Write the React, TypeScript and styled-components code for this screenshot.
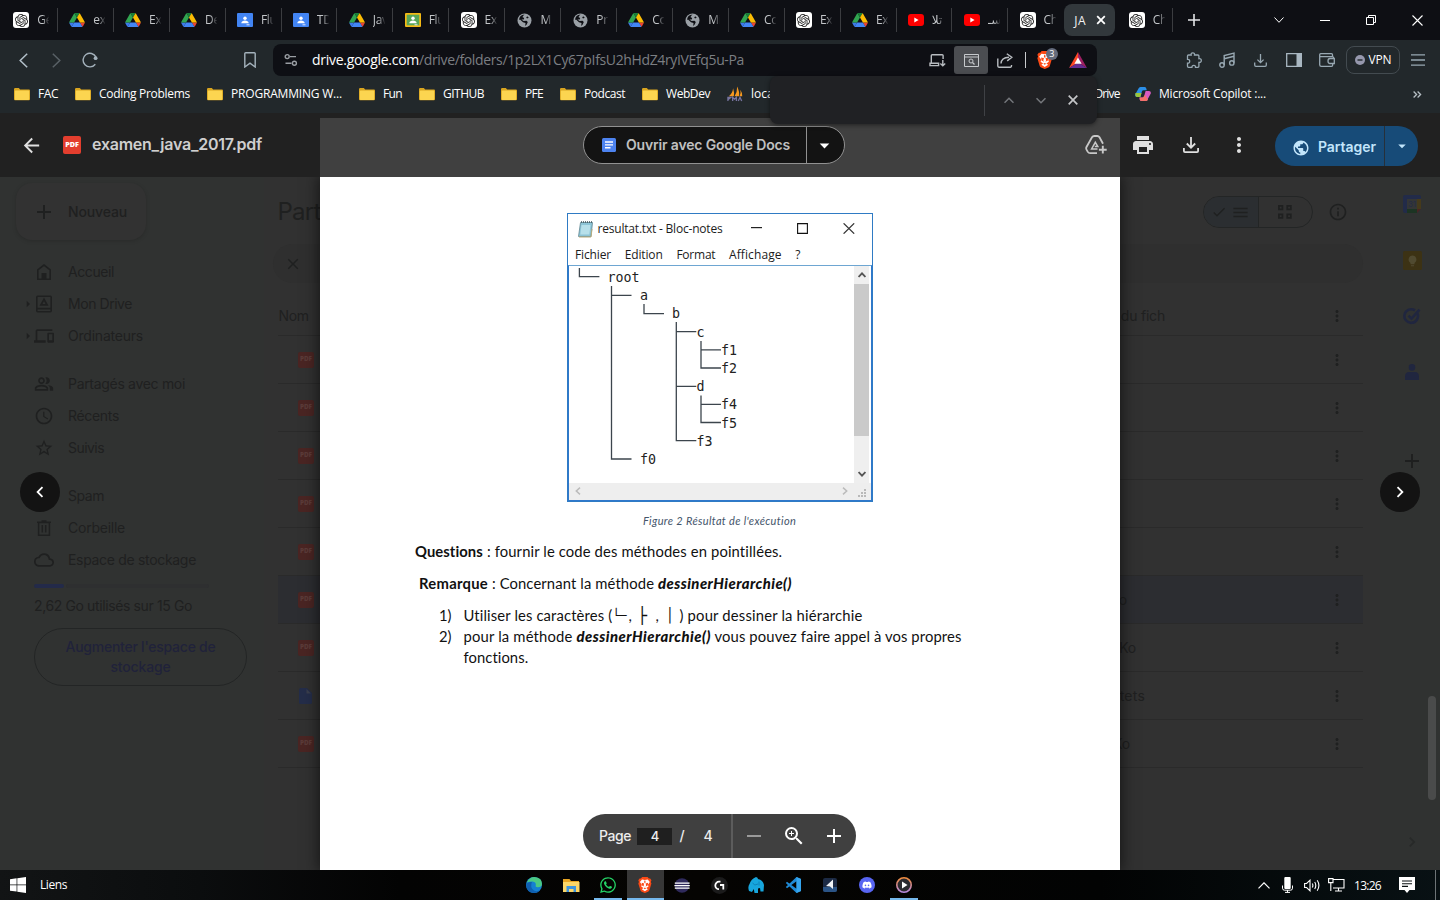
import React, { useLayoutEffect, useRef, useState } from "react";
import styled, { createGlobalStyle, css } from "styled-components";
import {
  MdAccessTime,
  MdAdd,
  MdArrowBack,
  MdArrowDropDown,
  MdArrowRight,
  MdCheck,
  MdChevronLeft,
  MdChevronRight,
  MdClose,
  MdDevices,
  MdInfoOutline,
  MdMenu,
  MdMoreVert,
  MdOutlineCloud,
  MdOutlinePeopleAlt,
  MdPrint,
  MdPublic,
  MdRemove,
  MdStarOutline,
  MdZoomIn,
} from "react-icons/md";
import { SiOpenai } from "react-icons/si";
import { FaDiscord, FaWhatsapp } from "react-icons/fa";

const ui = `"Open Sans", "Noto Sans", "DejaVu Sans", sans-serif`;
const google = `Inter, Roboto, sans-serif`;
const docFont = `Lato, "Open Sans", sans-serif`;
const mono = `"DejaVu Sans Mono", "Liberation Mono", monospace`;

const Global = createGlobalStyle`
  * { box-sizing: border-box; }
  html, body { margin: 0; padding: 0; background: #000; overflow: hidden; }
  svg { display: block; flex: none; }
`;

/* ---------- text that tracks itself to fill its slot ---------- */

const Slot = styled.span<{ $w: number }>`
  display: block;
  width: ${(p) => p.$w}px;
  flex: none;
  white-space: pre;
`;

function Fit({ w, children, className }: { w: number; children: React.ReactNode; className?: string }) {
  const ref = useRef<HTMLSpanElement>(null);
  const [tracking, setTracking] = useState(0);
  useLayoutEffect(() => {
    const el = ref.current;
    if (!el) return;
    const natural = el.getBoundingClientRect().width;
    const count = (el.textContent || "").length || 1;
    setTracking((w - natural) / count);
  }, [w]);
  return (
    <Slot $w={w} className={className}>
      <span ref={ref} style={{ letterSpacing: `${tracking}px` }}>
        {children}
      </span>
    </Slot>
  );
}

/* ---------- shared ---------- */

const Screen = styled.div`
  position: relative;
  width: 1440px;
  height: 900px;
  display: flex;
  flex-direction: column;
  overflow: hidden;
  font-family: ${ui};
  font-size: 12px;
`;

const Cell = styled.div<{ $w: number; $color?: string }>`
  width: ${(p) => p.$w}px;
  height: 100%;
  flex: none;
  display: flex;
  align-items: center;
  justify-content: center;
  color: ${(p) => p.$color || "inherit"};
`;

const Grow = styled.div`
  flex: 1;
`;

/* ---------- logos ---------- */

const GptBox = styled.div`
  width: 16px;
  height: 16px;
  border-radius: 3px;
  background: #fff;
  color: #222;
  display: flex;
  align-items: center;
  justify-content: center;
`;

const Gpt = () => (
  <GptBox>
    <SiOpenai size={13} />
  </GptBox>
);

const DriveLogo = () => (
  <svg width="16" height="14" viewBox="0 0 87.3 78">
    <path d="m6.6 66.85 3.85 6.65c.8 1.4 1.95 2.5 3.3 3.3l13.75-23.8h-27.5c0 1.55.4 3.1 1.2 4.5z" fill="#3c7bea" />
    <path d="m43.65 25-13.75-23.8c-1.35.8-2.5 1.9-3.3 3.3l-25.4 44a9.06 9.06 0 0 0 -1.2 4.5h27.5z" fill="#31a550" />
    <path d="m73.55 76.8c1.35-.8 2.5-1.9 3.3-3.3l1.6-2.75 7.65-13.25c.8-1.4 1.2-2.95 1.2-4.5h-27.502l5.852 11.5z" fill="#ea4335" />
    <path d="m43.65 25 13.75-23.8c-1.35-.8-2.9-1.2-4.5-1.2h-18.5c-1.6 0-3.15.45-4.5 1.2z" fill="#188038" />
    <path d="m59.8 53h-32.3l-13.75 23.8c1.35.8 2.9 1.2 4.5 1.2h50.8c1.6 0 3.15-.45 4.5-1.2z" fill="#4285f4" />
    <path d="m73.4 26.5-12.7-22c-.8-1.4-1.95-2.5-3.3-3.3l-13.75 23.8 16.15 28h27.45c0-1.55-.4-3.1-1.2-4.5z" fill="#fbbc04" />
  </svg>
);

const Classroom = ({ green }: { green?: boolean }) => (
  <svg width="16" height="14" viewBox="0 0 16 14">
    <rect width="16" height="14" rx="1" fill={green ? "#f5ba15" : "#4285f4"} />
    <rect x="1.7" y="1.7" width="12.6" height="10.6" fill={green ? "#57a55a" : "#4285f4"} />
    <circle cx="8" cy="5.3" r="1.7" fill="#fff" />
    <path d="M4.3 10.2c0-2 1.9-2.8 3.7-2.8s3.7.8 3.7 2.8z" fill="#fff" />
    <path d="M9.5 12.3h3v-1h-3z" fill="#dfe9fb" />
  </svg>
);

const Globe = () => (
  <svg width="15" height="15" viewBox="0 0 15 15">
    <circle cx="7.5" cy="7.5" r="7" fill="#9aa0a6" />
    <path d="M7.6 1.600C6 2.500 6.500 3.400 5.300 4l1.900.9-.5 1.500-2.300.1 2.200 1.500 2.900-.3 1.300 1.400-1.100 2.500-1.500 1.300.3-3-2.500-.6-3-2.900-1 .7A6 6 0 0 1 7.600 1.600z" fill="#0e0f14" />
    <path d="M10.200 3.200l1.600 1.600-1.800.8-.8-1.200z" fill="#0e0f14" />
  </svg>
);

const YouTube = () => (
  <svg width="16" height="12" viewBox="0 0 16 12">
    <rect width="16" height="12" rx="3" fill="#f00" />
    <path d="M6.3 3.5v5L10.6 6z" fill="#fff" />
  </svg>
);

const Folder = () => (
  <svg width="16" height="14" viewBox="0 0 16 14">
    <path d="M0 2.2Q0 1 1.2 1h3.6l1.4 1.6H15q1 0 1 1v8.6q0 1-1 1H1q-1 0-1-1z" fill="#d9a520" />
    <path d="M.8 4.4q0-.8.8-.8h12.8q.8 0 .8.8v7.8q0 .8-.8.8H1.6q-.8 0-.8-.8z" fill="#fcd550" />
  </svg>
);

const BraveLogo = ({ size }: { size: number }) => (
  <svg width={size * 0.86} height={size} viewBox="0 0 86 100">
    <path d="M18 10 26 0h34l8 10 8-1 8 12-4 10 4 9-13 43q-2 6-8 9L43 100 23 92q-6-3-8-9L2 40l4-9-4-10 8-12z" fill="#fb4a16" />
    <path d="M43 18 25 15 12 32l12 16-4 12 14 9-10 8 19 12 19-12-10-8 14-9-4-12 12-16-13-17z" fill="#fff" />
    <path d="M23 36l16 4-4 12 4 8-14-7zM63 36l-16 4 4 12-4 8 14-7zM43 66l8 5-8 6-8-6zM40 22h6l2 14h-10z" fill="#fb4a16" />
  </svg>
);

const BatLogo = () => (
  <svg width="18" height="16" viewBox="0 0 18 16">
    <path d="M9 0 0 16l9-5.2z" fill="#ff4724" />
    <path d="M9 0l9 16-9-5.2z" fill="#9e1f63" />
    <path d="M0 16h18l-9-5.4z" fill="#662d91" />
    <path d="M9 5.6 5.4 11.8h7.2z" fill="#fff" />
  </svg>
);

/* ---------- tab strip ---------- */

const TabStrip = styled.div`
  height: 40px;
  flex: none;
  display: flex;
  align-items: center;
  background: #0e0f14;
  padding-left: 2px;
  color: #fff;
`;

const Tab = styled.div<{ $w?: number; $bare?: boolean }>`
  width: ${(p) => p.$w || 55.92}px;
  height: 24px;
  flex: none;
  display: flex;
  align-items: center;
  gap: 8px;
  padding-left: 11.3px;
  border-right: 1px solid ${(p) => (p.$bare ? "transparent" : "#3b3c40")};
`;

const LastTab = styled(Tab)`
  width: 58px;
  padding-left: 13.5px;
`;

const IconBox = styled.div`
  width: 16px;
  height: 16px;
  flex: none;
  display: flex;
  align-items: center;
  justify-content: center;
`;

const TabTitle = styled.div`
  width: 12px;
  overflow: hidden;
  white-space: nowrap;
  font-size: 12px;
  line-height: 18px;
  color: #c3c6c9;
  letter-spacing: -0.3px;
  mask-image: linear-gradient(90deg, #000 45%, transparent 105%);
`;

const ActiveTab = styled.div`
  width: 51px;
  height: 32px;
  flex: none;
  border-radius: 8px;
  background: #32383c;
  display: flex;
  align-items: center;
  justify-content: space-between;
  padding: 0 9px 0 10px;
  color: #f2f2f2;
`;

const tabs: [React.ReactNode, string][] = [
  [<Gpt />, "Gé"],
  [<DriveLogo />, "ex"],
  [<DriveLogo />, "Ex"],
  [<DriveLogo />, "De"],
  [<Classroom />, "Flu"],
  [<Classroom />, "TD"],
  [<DriveLogo />, "Jav"],
  [<Classroom green />, "Flu"],
  [<Gpt />, "Ex"],
  [<Globe />, "Mi"],
  [<Globe />, "Pr"],
  [<DriveLogo />, "Co"],
  [<Globe />, "Mi"],
  [<DriveLogo />, "Co"],
  [<Gpt />, "Ex"],
  [<DriveLogo />, "Ex"],
  [<YouTube />, "تلا"],
  [<YouTube />, "سـ"],
];

const Tabs = () => (
  <TabStrip>
    {tabs.map(([icon, title], i) => (
      <Tab key={i}>
        <IconBox>{icon}</IconBox>
        <TabTitle>{title}</TabTitle>
      </Tab>
    ))}
    <Tab $bare>
      <IconBox>
        <Gpt />
      </IconBox>
      <TabTitle>Ch</TabTitle>
    </Tab>
    <ActiveTab>
      <Fit w={12}>JA</Fit>
      <svg width="10" height="10" viewBox="0 0 10 10" stroke="#fff" strokeWidth="1.8">
        <path d="M1.2 1.2l7.6 7.6M8.8 1.2 1.2 8.8" />
      </svg>
    </ActiveTab>
    <LastTab>
      <IconBox>
        <Gpt />
      </IconBox>
      <TabTitle>Ch</TabTitle>
    </LastTab>
    <Cell $w={41}>
      <svg width="12" height="12" viewBox="0 0 12 12" stroke="#e4e5e7" strokeWidth="1.6">
        <path d="M6 0v12M0 6h12" />
      </svg>
    </Cell>
    <Grow />
    <Cell $w={46}>
      <svg width="10" height="6" viewBox="0 0 10 6" fill="none" stroke="#fff">
        <path d="M.5.5 5 5.3 9.5.5" />
      </svg>
    </Cell>
    <Cell $w={46}>
      <svg width="10" height="1" viewBox="0 0 10 1">
        <rect width="10" height="1" fill="#fff" />
      </svg>
    </Cell>
    <Cell $w={46}>
      <svg width="10" height="10" viewBox="0 0 10 10" fill="none" stroke="#fff">
        <path d="M.5 2.5h7v7h-7zM2.5 2.5v-2h7v7h-2" />
      </svg>
    </Cell>
    <Cell $w={46}>
      <svg width="11" height="11" viewBox="0 0 11 11" stroke="#fff" strokeWidth="1.1">
        <path d="M.5.5l10 10M10.5.5l-10 10" />
      </svg>
    </Cell>
  </TabStrip>
);

/* ---------- toolbar ---------- */

const Toolbar = styled.div`
  height: 40px;
  flex: none;
  display: flex;
  align-items: center;
  background: #22282b;
  padding-left: 6.5px;
  color: #a4b2bc;
`;

const Address = styled.div`
  width: 824px;
  height: 32px;
  flex: none;
  margin-left: 6px;
  border-radius: 8px;
  background: #0e0f14;
  display: flex;
  align-items: center;
  padding: 0 2px 0 10px;
  font-size: 14px;
  line-height: 20px;
`;

const Domain = styled(Fit)`
  color: #fff;
  margin-left: 13px;
`;

const Path = styled(Fit)`
  color: #7b7e82;
`;

const Lit = styled.div`
  width: 34px;
  height: 28px;
  border-radius: 3px;
  background: #4b4d51;
  display: flex;
  align-items: center;
  justify-content: center;
`;

const VRule = styled.div<{ $h: number; $color: string }>`
  width: 1px;
  height: ${(p) => p.$h}px;
  flex: none;
  background: ${(p) => p.$color};
`;

const Shield = styled.div`
  position: relative;
`;

const Badge = styled.div`
  position: absolute;
  left: 9px;
  top: -3px;
  width: 12px;
  height: 12px;
  border-radius: 6px;
  background: #646b7c;
  color: #fff;
  font-size: 9px;
  line-height: 12px;
  text-align: center;
`;

const Vpn = styled.div`
  width: 54px;
  height: 28px;
  margin-left: 2px;
  border: 1px solid #434b50;
  border-radius: 8px;
  display: flex;
  align-items: center;
  justify-content: center;
  gap: 4px;
  color: #fff;
  font-size: 12px;
  line-height: 16px;
`;

const Nav = () => (
  <Toolbar>
    <Cell $w={33}>
      <svg width="9" height="15" viewBox="0 0 9 15" fill="none" stroke="#b3c0ca" strokeWidth="1.5">
        <path d="M8.2.8 1.2 7.5l7 6.7" />
      </svg>
    </Cell>
    <Cell $w={34}>
      <svg width="9" height="15" viewBox="0 0 9 15" fill="none" stroke="#596166" strokeWidth="1.5">
        <path d="M.8.8l7 6.7-7 6.7" />
      </svg>
    </Cell>
    <Cell $w={34}>
      <svg width="17" height="16" viewBox="0 0 17 16" fill="none" stroke="#a4b2bc" strokeWidth="1.4">
        <path d="M13.3 12.2A6.8 6.8 0 1 1 14 5" />
        <circle cx="13.6" cy="6.2" r="1.9" fill="#a4b2bc" stroke="none" />
      </svg>
    </Cell>
    <Cell $w={125.5} />
    <Cell $w={34}>
      <svg width="12" height="16" viewBox="0 0 12 16" fill="none" stroke="#a4b2bc" strokeWidth="1.4">
        <path d="M.8 15V1.6q0-.9.9-.9h8.6q.9 0 .9.9V15L6 11.2z" />
      </svg>
    </Cell>
    <Address>
      <svg width="16" height="14" viewBox="0 0 16 14" fill="none" stroke="#9a9ea3" strokeWidth="1.4">
        <circle cx="4.2" cy="3.6" r="2" />
        <circle cx="11.4" cy="10.2" r="2" />
        <path d="M7 3.6h6M2.5 10.2h6" />
      </svg>
      <Domain w={107}>drive.google.com</Domain>
      <Path w={325}>/drive/folders/1p2LX1Cy67pIfsU2hHdZ4ryIVEfq5u-Pa</Path>
      <Grow />
      <Cell $w={34}>
        <svg width="17" height="13" viewBox="0 0 17 13" fill="none" stroke="#b8bcc0" strokeWidth="1.4">
          <path d="M2.3 9V1.6q0-.9.9-.9h10q.9 0 .9.9V5M1 11.6V9.3h8.6v2.3zM9.6 11.6H1M13.8 6v5.5M11.4 9.6l2.4 2.3 2.4-2.3" />
        </svg>
      </Cell>
      <Lit>
        <svg width="15" height="13" viewBox="0 0 15 13" fill="none" stroke="#c6c9cc">
          <path d="M.5.5h14v12H.5zM.5 3h14" />
          <circle cx="7" cy="7" r="2" />
          <path d="M8.5 8.5l2 2" strokeWidth="1.3" />
        </svg>
      </Lit>
      <Cell $w={34}>
        <svg width="17" height="15" viewBox="0 0 17 15" fill="none" stroke="#b8bcc0" strokeWidth="1.4">
          <path d="M.8 5.5v7.6q0 1.1 1.1 1.1h11.6q1 0 1-1.1v-1M4 10.6q.2-6 8-6.4M9.8.8l5 3.500-4.600 3.600" />
        </svg>
      </Cell>
      <Cell $w={6}>
        <VRule $h={16} $color="#c8cacd" />
      </Cell>
      <Cell $w={33}>
        <Shield>
          <BraveLogo size={18} />
          <Badge>3</Badge>
        </Shield>
      </Cell>
      <Cell $w={34}>
        <BatLogo />
      </Cell>
    </Address>
    <Cell $w={80} />
    <Cell $w={33}>
      <svg width="16" height="17" viewBox="0 0 16 17" fill="none" stroke="#98a8b2" strokeWidth="1.3">
        <path d="M1.5 4q0-1 1-1h2.7q-.5-2.2 1.6-2.2T8.500 3h3.4q1 0 1 1v2.700q2.400-.4 2.400 1.800t-2.400 1.900v3.900q0 1-1 1H9.500q.2-2-1.700-2t-1.900 2H2.500q-1 0-1-1v-3.100q2.200.2 2.200-1.900T1.500 7.300z" />
      </svg>
    </Cell>
    <Cell $w={34}>
      <svg width="16" height="16" viewBox="0 0 16 16" fill="none" stroke="#98a8b2" strokeWidth="1.4">
        <path d="M5.200 13V3.600l9.800-2.500v9.700M5.200 6.800 15 4.300" />
        <circle cx="3" cy="13" r="2.200" />
        <circle cx="12.800" cy="10.900" r="2.200" />
      </svg>
    </Cell>
    <Cell $w={33}>
      <svg width="13" height="13" viewBox="0 0 13 13" fill="none" stroke="#98a8b2" strokeWidth="1.3">
        <path d="M6.500 0v8.500M3.400 5.600l3.100 3.100 3.100-3.100M.7 8.500v2.600q0 1.200 1.200 1.200h9.200q1.200 0 1.200-1.200V8.500" />
      </svg>
    </Cell>
    <Cell $w={33}>
      <svg width="16" height="14" viewBox="0 0 16 14">
        <path d="M.7.700h14.600v12.600H.7z" fill="none" stroke="#a9b7c1" strokeWidth="1.300" />
        <rect x="10.500" width="5.500" height="14" fill="#a9b7c1" />
      </svg>
    </Cell>
    <Cell $w={34}>
      <svg width="16" height="14" viewBox="0 0 16 14" fill="none" stroke="#98a8b2" strokeWidth="1.300">
        <path d="M13.500 3.600V1.700q0-1-1-1H1.700q-1 0-1 1v10q0 1.600 1.600 1.600h10.200q1.200 0 1.200-1.200v-1.400M1 3.600h12.500q1 0 1 1v.8M15.300 5.500v5H11q-2 0-2-2.500t2-2.500z" />
      </svg>
    </Cell>
    <Vpn>
      <svg width="10" height="10" viewBox="0 0 10 10">
        <circle cx="5" cy="5" r="5" fill="#9698ad" />
        <rect x="2.500" y="4.300" width="5" height="1.400" fill="#22282b" />
      </svg>
      <Fit w={23}>VPN</Fit>
    </Vpn>
    <Cell $w={36}>
      <svg width="14" height="12" viewBox="0 0 14 12" stroke="#98a8b2" strokeWidth="1.300">
        <path d="M0 .8h14M0 6h14M0 11.200h14" />
      </svg>
    </Cell>
  </Toolbar>
);

/* ---------- bookmarks ---------- */

const Bookmarks = styled.div`
  height: 33px;
  flex: none;
  display: flex;
  align-items: flex-start;
  background: #22282b;
  padding: 5px 0 0 14px;
  color: #fff;
  font-size: 12px;
  line-height: 18px;
`;

const Bookmark = styled.div<{ $gap?: number }>`
  height: 18px;
  display: flex;
  align-items: center;
  gap: 8px;
  margin-right: ${(p) => p.$gap ?? 17}px;
`;

const More = styled.div`
  width: 45px;
  height: 18px;
  display: flex;
  align-items: center;
  justify-content: center;
`;

const marks: [string, number][] = [
  ["FAC", 20],
  ["Coding Problems", 91],
  ["PROGRAMMING W...", 111],
  ["Fun", 19],
  ["GITHUB", 41],
  ["PFE", 18],
  ["Podcast", 41],
  ["WebDev", 44],
];

const BookmarkRow = () => (
  <Bookmarks>
    {marks.map(([t, w]) => (
      <Bookmark key={t}>
        <Folder />
        <Fit w={w}>{t}</Fit>
      </Bookmark>
    ))}
    <Bookmark>
      <svg width="16" height="16" viewBox="0 0 17 16">
        <path d="M2 10.500Q6 7 6.500 2q1.500 5 .8 8.500zM8 10.500Q11 6 10.800 0q2.800 6 2 10.500zM13.400 10.300Q15 7 14.200 3.500q2.500 4 2 6.800z" fill="#f6991f" />
        <path d="M1 15.500V11.500h3l-3 2.500M6 15.500v-4l2 2 2-2v4M12 15.500l1.800-4 1.800 4" fill="none" stroke="#77749f" strokeWidth="1.400" />
      </svg>
      <Fit w={50}>localhost</Fit>
    </Bookmark>
    <Cell $w={276.500} />
    <Bookmark $gap={15.500}>
      <Fit w={25}>Drive</Fit>
    </Bookmark>
    <Bookmark>
      <svg width="16" height="14" viewBox="0 0 16 14">
        <path d="M3.500 1.500Q4 0 5.500 0h4q1.300 0 1.700 1.300l.6 2H8.500q-1.200 0-1.600 1.200L5.400 10H2Q-.3 10 .2 7.500z" fill="#2b8fe8" />
        <path d="M.4 6Q0 10 2 10h3.400L6.500 6z" fill="#9bc53c" />
        <path d="M12.500 12.500q-.5 1.500-2 1.500h-4q-1.300 0-1.700-1.300l-.6-2.200h3.300q1.200 0 1.600-1.200L10.600 4H14q2.300 0 1.800 2.500z" fill="#d95bc0" />
        <path d="M5 10.500h3l2-2.500 3 4.500q-.5 1.500-2 1.500h-4.500q-1.300 0-1.700-1.300z" fill="#f4716a" />
      </svg>
      <Fit w={107}>Microsoft Copilot :...</Fit>
    </Bookmark>
    <Grow />
    <More>
      <svg width="9" height="7" viewBox="0 0 9 7" fill="none" stroke="#b6bfc5" strokeWidth="1.300">
        <path d="M.6.500l3 3-3 3M4.600.500l3 3-3 3" />
      </svg>
    </More>
  </Bookmarks>
);

const FindBar = styled.div`
  position: absolute;
  left: 770px;
  top: 76px;
  width: 327px;
  height: 48px;
  border-radius: 8px;
  background: #202124;
  box-shadow: 0 1px 5px rgba(0, 0, 0, 0.5);
  display: flex;
  align-items: center;
  justify-content: flex-end;
  padding-right: 8px;
  z-index: 5;
`;

const Find = () => (
  <FindBar>
    <VRule $h={31} $color="#3f4145" />
    <Cell $w={8} />
    <Cell $w={32}>
      <svg width="10" height="7" viewBox="0 0 10 7" fill="none" stroke="#74777b" strokeWidth="1.500">
        <path d="M.5 5.800 5 1.200l4.500 4.600" />
      </svg>
    </Cell>
    <Cell $w={32}>
      <svg width="10" height="7" viewBox="0 0 10 7" fill="none" stroke="#74777b" strokeWidth="1.500">
        <path d="M.5 1.200 5 5.800l4.500-4.600" />
      </svg>
    </Cell>
    <Cell $w={32}>
      <svg width="10" height="10" viewBox="0 0 10 10" stroke="#c4c6c8" strokeWidth="1.700">
        <path d="M.7.700l8.600 8.600M9.300.700.700 9.300" />
      </svg>
    </Cell>
  </FindBar>
);

/* ---------- dimmed Drive page ---------- */

const Content = styled.div`
  position: relative;
  flex: 1;
  min-height: 0;
  overflow: hidden;
  background: #303231;
`;

const Backdrop = styled.div`
  position: absolute;
  inset: 0;
  display: flex;
  font-family: ${google};
  font-size: 14px;
  line-height: 20px;
  color: #1f2020;
`;

const Side = styled.div`
  width: 264px;
  flex: none;
  padding-top: 70px;
`;

const NewButton = styled.div`
  width: 130px;
  height: 57px;
  margin: 0 0 16px 16px;
  border-radius: 16px;
  background: #323232;
  box-shadow: 0 1px 4px rgba(0, 0, 0, 0.16);
  display: flex;
  align-items: center;
  gap: 12px;
  padding-left: 16px;
  font-weight: 500;
`;

const NavItem = styled.div<{ $gap?: boolean }>`
  height: 32px;
  margin-top: ${(p) => (p.$gap ? 16 : 0)}px;
  display: flex;
  align-items: center;
  font-size: 14px;
`;

const Caret = styled.div`
  width: 12px;
  margin-left: 22px;
  display: flex;
  justify-content: center;
`;

const NavIcon = styled.div`
  width: 24px;
  margin-left: -2px;
  margin-right: 12px;
  display: flex;
  justify-content: center;
`;

const Meter = styled.div`
  display: flex;
  gap: 2px;
  margin: 8px 0 0 34px;
`;

const MeterPart = styled.div<{ $w: number; $bg: string }>`
  width: ${(p) => p.$w}px;
  height: 4px;
  border-radius: 2px;
  background: ${(p) => p.$bg};
`;

const Usage = styled.div`
  margin: 8px 0 12px 34px;
`;

const Upgrade = styled.div`
  width: 213px;
  height: 58px;
  margin-left: 34px;
  border: 1px solid #232525;
  border-radius: 29px;
  display: flex;
  flex-direction: column;
  align-items: center;
  justify-content: center;
  color: #20223a;
  font-weight: 500;
`;

const Main = styled.div`
  width: 1116px;
  flex: none;
  padding: 79px 17px 0 13.500px;
  background: #313131;
`;

const MainHead = styled.div`
  height: 40px;
  display: flex;
  align-items: center;
  font-size: 24px;
`;

const Toggle = styled.div`
  width: 110px;
  height: 32px;
  border: 1px solid #232525;
  border-radius: 16px;
  display: flex;
  overflow: hidden;
`;

const ToggleHalf = styled.div<{ $on?: boolean }>`
  flex: 1;
  display: flex;
  align-items: center;
  justify-content: center;
  gap: 4px;
  ${(p) =>
    p.$on &&
    css`
      background: #2b2e31;
      border-right: 1px solid #232525;
    `}
`;

const Chips = styled.div`
  height: 39px;
  margin: 12px 0 12px -5px;
  border-radius: 20px;
  background: #2f2f2f;
  display: flex;
  align-items: center;
  padding-left: 11px;
`;

const ListRow = styled.div<{ $on?: boolean }>`
  height: 48px;
  display: flex;
  align-items: center;
  border-bottom: 1px solid #2a2a2a;
  background: ${(p) => (p.$on ? "#2c2d31" : "transparent")};
  padding-left: 20.500px;
  padding-right: 17px;
`;

const HeadRow = styled(ListRow)`
  height: 41px;
  padding-left: 1px;
  padding-top: 2px;
`;

const Tail = styled.div`
  width: 262px;
  display: flex;
  align-items: center;
  justify-content: space-between;
`;

const Pdf = styled.div<{ $size: number; $dim?: boolean }>`
  width: ${(p) => p.$size}px;
  height: ${(p) => p.$size}px;
  flex: none;
  border-radius: 2px;
  background: ${(p) => (p.$dim ? "#4a2523" : "#e33e2e")};
  color: ${(p) => (p.$dim ? "#5b3b39" : "#fff")};
  display: flex;
  align-items: center;
  justify-content: center;
  font-family: "Open Sans", sans-serif;
  font-weight: 800;
  font-size: ${(p) => p.$size * 0.4}px;
  line-height: 1;
  letter-spacing: -0.1px;
`;

const Rail = styled.div`
  flex: 1;
  padding-top: 81px;
  display: flex;
  flex-direction: column;
  align-items: center;
`;

const RailCell = styled.div<{ $h: number; $color?: string }>`
  width: 56px;
  height: ${(p) => p.$h}px;
  margin-left: 4px;
  flex: none;
  display: flex;
  align-items: center;
  justify-content: center;
  color: ${(p) => p.$color || "#1e1f1f"};
`;

const CalendarDay = styled.div`
  position: absolute;
  width: 18px;
  text-align: center;
  font-size: 8px;
  line-height: 18px;
  color: #252c45;
`;

const Home = () => (
  <svg width="20" height="20" viewBox="0 0 20 20" fill="none" stroke="currentColor" strokeWidth="1.600">
    <path d="M3.800 17.200V7.800L10 3l6.200 4.800v9.400z" />
    <rect x="7.500" y="11" width="5" height="6" fill="currentColor" stroke="none" />
  </svg>
);

const MyDrive = () => (
  <svg width="20" height="20" viewBox="0 0 20 20" fill="none" stroke="currentColor" strokeWidth="1.600">
    <rect x="2.800" y="2.300" width="14.400" height="15.400" rx="1" />
    <path d="M3 14.600h14M10 5.400 7 10.800h6z" strokeWidth="1.800" />
  </svg>
);

const Trash = () => (
  <svg width="18" height="18" viewBox="0 0 18 18" fill="none" stroke="currentColor" strokeWidth="1.500">
    <path d="M3.600 3.500h10.800v12.700H3.600zM2 3.200h14M6.500 2h5M7.300 6v7.500M10.700 6v7.500" />
  </svg>
);

const SpamIcon = () => (
  <svg width="18" height="18" viewBox="0 0 18 18" fill="none" stroke="currentColor" strokeWidth="1.500">
    <path d="M5.700 1.500h6.600l4.200 4.200v6.600l-4.200 4.200H5.700l-4.200-4.200V5.700zM9 5v5M9 11.500V13" />
  </svg>
);

const DocFile = () => (
  <svg width="14" height="16" viewBox="0 0 14 16">
    <path d="M0 1.500Q0 0 1.500 0H8l5 5v9.500q0 1.500-1.500 1.500h-10Q0 16 0 14.500z" fill="#242d49" />
    <path d="M7.500 1v4.500H12z" fill="#3a3f4d" />
  </svg>
);

const navItems: [React.ReactNode, string, number, boolean?, boolean?][] = [
  [<Home />, "Accueil", 46],
  [<MyDrive />, "Mon Drive", 64, false, true],
  [<MdDevices size={20} />, "Ordinateurs", 75, false, true],
  [<MdOutlinePeopleAlt size={20} />, "Partagés avec moi", 117, true],
  [<MdAccessTime size={20} />, "Récents", 51],
  [<MdStarOutline size={20} />, "Suivis", 36],
  [<SpamIcon />, "Spam", 36, true],
  [<Trash />, "Corbeille", 57],
  [<MdOutlineCloud size={20} />, "Espace de stockage", 128],
];

const listRows: { tail?: string; w?: number; on?: boolean; doc?: boolean }[] = [
  {},
  {},
  {},
  {},
  {},
  { tail: "213 Ko", w: 43, on: true },
  { tail: "1 135 Ko", w: 52 },
  { tail: "12 octets", w: 61, doc: true },
  { tail: "248 Ko", w: 46 },
];

const DrivePage = () => (
  <Backdrop>
    <Side>
      <NewButton>
        <MdAdd size={24} />
        <Fit w={59}>Nouveau</Fit>
      </NewButton>
      {navItems.map(([icon, t, w, gap, caret]) => (
        <NavItem key={t} $gap={gap}>
          <Caret>{caret && <MdArrowRight size={16} />}</Caret>
          <NavIcon>{icon}</NavIcon>
          <Fit w={w}>{t}</Fit>
        </NavItem>
      ))}
      <Meter>
        <MeterPart $w={30} $bg="#232a49" />
        <MeterPart $w={143} $bg="#2e2f30" />
      </Meter>
      <Usage>
        <Fit w={158}>2,62 Go utilisés sur 15 Go</Fit>
      </Usage>
      <Upgrade>
        <Fit w={150}>Augmenter l'espace de</Fit>
        <Fit w={60}>stockage</Fit>
      </Upgrade>
    </Side>
    <Main>
      <MainHead>
        <Fit w={197}>Partagés avec moi</Fit>
        <Grow />
        <Toggle>
          <ToggleHalf $on>
            <MdCheck size={16} />
            <MdMenu size={19} />
          </ToggleHalf>
          <ToggleHalf>
            <svg width="14" height="14" viewBox="0 0 14 14" fill="none" stroke="currentColor" strokeWidth="1.800">
              <path d="M.9.900h3.500v3.500H.9zM9.300.900h3.500v3.500H9.300zM.9 9.300h3.500v3.500H.9zM9.300 9.300h3.500v3.500H9.300z" />
            </svg>
          </ToggleHalf>
        </Toggle>
        <Cell $w={50}>
          <MdInfoOutline size={20} />
        </Cell>
      </MainHead>
      <Chips>
        <MdClose size={18} />
      </Chips>
      <HeadRow>
        <Fit w={30}>Nom</Fit>
        <Grow />
        <Tail>
          <Fit w={81}>Taille du fich</Fit>
          <MdMoreVert size={18} />
        </Tail>
      </HeadRow>
      {listRows.map((r, i) => (
        <ListRow key={i} $on={r.on}>
          {r.doc ? (
            <IconBox>
              <DocFile />
            </IconBox>
          ) : (
            <Pdf $size={16} $dim>
              PDF
            </Pdf>
          )}
          <Grow />
          <Tail>
            {r.tail && <Fit w={r.w || 40}>{r.tail}</Fit>}
            <Grow />
            <MdMoreVert size={18} />
          </Tail>
        </ListRow>
      ))}
    </Main>
    <Rail>
      <RailCell $h={20}>
        <svg width="18" height="18" viewBox="0 0 18 18">
          <path d="M0 2q0-2 2-2h14q2 0 2 2v12l-4 4H2q-2 0-2-2z" fill="#222b49" />
          <path d="M14 4h4v10h-4z" fill="#453a1b" />
          <path d="M4 14h10v4H4z" fill="#1c3423" />
          <path d="M14 14h4l-4 4z" fill="#4a2523" />
          <path d="M4 4h10v10H4z" fill="#343636" />
        </svg>
        <CalendarDay>31</CalendarDay>
      </RailCell>
      <RailCell $h={36} />
      <RailCell $h={20}>
        <svg width="19" height="19" viewBox="0 0 19 19">
          <rect width="19" height="19" rx="1.500" fill="#3c3214" />
          <path d="M9.500 4.500a4 4 0 0 0-2 7.400v1.300h4v-1.300a4 4 0 0 0-2-7.400zM8 14.200h3v1H8z" fill="#504a30" />
        </svg>
      </RailCell>
      <RailCell $h={36} />
      <RailCell $h={20}>
        <svg width="18" height="18" viewBox="0 0 18 18" fill="none" stroke="#20263f" strokeWidth="2.600">
          <path d="M14.500 6.500A6.800 6.800 0 1 1 12 3.400" />
          <path d="M5.500 8.600l3 3L16.500 2.600" />
        </svg>
      </RailCell>
      <RailCell $h={36} />
      <RailCell $h={20}>
        <svg width="14" height="16" viewBox="0 0 14 16" fill="#20263f">
          <circle cx="7" cy="3.400" r="3.300" />
          <path d="M0 16v-3.500Q0 8 4 8h6q4 0 4 4.500V16z" />
        </svg>
      </RailCell>
      <RailCell $h={68} />
      <RailCell $h={22}>
        <svg width="14" height="14" viewBox="0 0 14 14" stroke="currentColor" strokeWidth="1.800">
          <path d="M7 0v14M0 7h14" />
        </svg>
      </RailCell>
      <RailCell $h={359} />
      <RailCell $h={22} $color="#272928">
        <MdChevronRight size={20} />
      </RailCell>
    </Rail>
  </Backdrop>
);

/* ---------- viewer ---------- */

const Viewer = styled.div`
  position: absolute;
  inset: 0;
  display: grid;
  grid-template-columns: 320px 800px 320px;
  grid-template-rows: 64px 1fr;
  font-family: ${google};
`;

const HeadSide = styled.div`
  background: #212121;
  display: flex;
  align-items: center;
  color: #e0e0e0;
  position: relative;
  z-index: 2;
`;

const FileName = styled(Fit)`
  margin: 0 0 2px 11px;
  font-size: 16px;
  font-weight: 600;
  line-height: 22px;
  color: #cfcfcf;
`;

const HeadCenter = styled.div`
  position: relative;
  z-index: 2;
  background: #404040;
  border-top: 5px solid #212121;
  display: grid;
  grid-template-columns: 263px 262px 1fr;
  align-items: start;
  padding-top: 8px;
`;

const OpenWith = styled.div`
  height: 38px;
  border: 1px solid #919191;
  border-radius: 19px;
  background: #131313;
  display: flex;
  align-items: center;
  overflow: hidden;
  padding-left: 18px;
  font-size: 14px;
  font-weight: 600;
  line-height: 20px;
  color: #c0c0c0;
`;

const OpenLabel = styled(Fit)`
  margin: 0 16px 0 10px;
`;

const HeadEnd = styled.div`
  height: 38px;
  display: flex;
  align-items: center;
  justify-content: flex-end;
  padding-right: 13px;
  color: #c8c8c8;
`;

const Share = styled.div`
  width: 143px;
  height: 40px;
  margin-left: 13px;
  margin-top: 2px;
  border-radius: 20px;
  overflow: hidden;
  background: #174b78;
  display: flex;
  align-items: center;
  padding-left: 17px;
  color: #c2e5fb;
  font-size: 14px;
  font-weight: 600;
  line-height: 20px;
`;

const ShareIcon = styled.div`
  padding-top: 4px;
`;

const ShareLabel = styled(Fit)`
  margin: 2px 8px 0 8px;
`;

const ShareDrop = styled.div`
  width: 34px;
  height: 40px;
  border-left: 1px solid #26303a;
  display: flex;
  align-items: center;
  justify-content: center;
`;

const Gutter = styled.div<{ $right?: boolean }>`
  display: flex;
  align-items: flex-start;
  justify-content: ${(p) => (p.$right ? "flex-end" : "flex-start")};
  padding: 295px 20px 0;
`;

const Round = styled.div`
  width: 40px;
  height: 40px;
  border-radius: 50%;
  background: #131313;
  color: #fff;
  display: flex;
  align-items: center;
  justify-content: center;
`;

const Paper = styled.div`
  position: relative;
  background: #fff;
  box-shadow: 0 0 14px 2px rgba(0, 0, 0, 0.55);
  padding: 36px 0 0 95px;
  font-family: ${docFont};
  font-size: 14.800px;
  line-height: 21px;
  color: #111;
`;

const Caption = styled.div`
  margin: 10px 0 0 228px;
  font-size: 11px;
  font-style: italic;
  line-height: 18px;
  color: #44546a;
`;

const Para = styled.div<{ $top: number; $left?: number }>`
  margin-top: ${(p) => p.$top}px;
  margin-left: ${(p) => p.$left || 0}px;
  display: flex;
  b { font-weight: 700; }
  i { font-style: italic; font-weight: 900; }
`;

const Num = styled.span`
  width: 24.500px;
  flex: none;
`;

const Glyph = styled.span<{ $w: number; $size: number }>`
  width: ${(p) => p.$w}px;
  font-family: ${mono};
  font-size: ${(p) => p.$size}px;
  letter-spacing: -1.500px;
  white-space: pre;
`;

/* notepad window */

const Window = styled.div`
  width: 306px;
  height: 289px;
  margin-left: 152px;
  border: 1px solid #2f7bc4;
  display: flex;
  flex-direction: column;
  background: #fff;
  font-family: ${ui};
  font-size: 12px;
  line-height: 16px;
  color: #1c1c1c;
`;

const TitleBar = styled.div`
  height: 30px;
  display: flex;
  align-items: center;
  padding-left: 8.500px;
`;

const TitleText = styled(Fit)`
  margin-left: 5px;
`;

const WindowButton = styled.div`
  height: 100%;
  display: flex;
  align-items: center;
  padding-bottom: 2px;
`;

const MenuBar = styled.div`
  height: 21px;
  display: flex;
  align-items: center;
  gap: 13.700px;
  padding-left: 7px;
`;

const TextArea = styled.div`
  flex: 1;
  border: 1px solid #2f78cc;
  border-top: 1px solid #6ea6d2;
  display: grid;
  grid-template-columns: 1fr 15px 2px;
  grid-template-rows: 1fr 17px;
`;

const Tree = styled.div`
  position: relative;
  padding-top: 3px;
  font-family: ${mono};
  font-size: 13.300px;
  color: #222;
`;

const TreeLines = styled.svg`
  position: absolute;
  left: 0;
  top: 0;
`;

const TreeRow = styled.div<{ $x: number }>`
  height: 18.200px;
  line-height: 18.200px;
  padding-left: ${(p) => p.$x - 569}px;
`;

const ScrollY = styled.div`
  background: #efefef;
  display: flex;
  flex-direction: column;
  align-items: center;
`;

const Thumb = styled.div`
  width: 15px;
  height: 152px;
  background: #cacaca;
`;

const ScrollX = styled.div`
  background: #eeeeee;
  display: flex;
  align-items: center;
  justify-content: space-between;
  padding: 0 6px 2px;
`;

const Corner = styled.div`
  grid-column: span 2;
  background: #eeeeee;
  display: flex;
  align-items: flex-end;
  justify-content: center;
  padding-bottom: 2px;
`;

const ArrowBox = styled.div<{ $h: number }>`
  height: ${(p) => p.$h}px;
  display: flex;
  align-items: center;
`;

const nodes: [string, number][] = [
  ["root", 607.500],
  ["a", 640],
  ["b", 672],
  ["c", 696.500],
  ["f1", 721],
  ["f2", 721],
  ["d", 696.500],
  ["f4", 721],
  ["f5", 721],
  ["f3", 696.500],
  ["f0", 640],
];

const Notepad = () => (
  <Window>
    <TitleBar>
      <svg width="16" height="17" viewBox="0 0 16 17">
        <path d="M3.500 1.500h12l-1.500 14H1.500z" fill="#8cc4d6" stroke="#5f8792" strokeWidth=".8" />
        <path d="M4.500 4h9l-1.200 9.500h-9z" fill="#b7e0ea" />
        <path d="M4 1h11" stroke="#40555c" strokeWidth="1.500" strokeDasharray="1 1" />
        <path d="M2 16h12l1-8" fill="none" stroke="#b9ac7c" />
      </svg>
      <TitleText w={125}>resultat.txt - Bloc-notes</TitleText>
      <Cell $w={28} />
      <WindowButton>
        <svg width="11" height="2" viewBox="0 0 11 2">
          <rect width="11" height="1.200" fill="#222" />
        </svg>
      </WindowButton>
      <Cell $w={35} />
      <WindowButton>
        <svg width="11" height="11" viewBox="0 0 11 11" fill="none" stroke="#111" strokeWidth="1.100">
          <path d="M.6.600h9.800v9.800H.6z" />
        </svg>
      </WindowButton>
      <Cell $w={35} />
      <WindowButton>
        <svg width="12" height="11" viewBox="0 0 12 11" stroke="#333" strokeWidth="1.200">
          <path d="M.6.300l10.600 10.400M11.200.300.600 10.700" />
        </svg>
      </WindowButton>
    </TitleBar>
    <MenuBar>
      <Fit w={36}>Fichier</Fit>
      <Fit w={38}>Edition</Fit>
      <Fit w={39}>Format</Fit>
      <Fit w={52.500}>Affichage</Fit>
      <Fit w={5}>?</Fit>
    </MenuBar>
    <TextArea>
      <Tree>
        <TreeLines width="285" height="217" viewBox="569 266 285 217" fill="none" stroke="#3c454d" strokeWidth="1.300">
          <path d="M579.400 268v8.700h20M611.500 286v173h20M611.500 295.400h20M644 304v9.600h20M676.300 322v118.600h20M676.300 331.600h20M676.300 386.400h20M701 341v27h20M701 349.800h20M701 395.500v27h20M701 404.400h20" />
        </TreeLines>
        {nodes.map(([t, x]) => (
          <TreeRow key={t} $x={x}>
            {t}
          </TreeRow>
        ))}
      </Tree>
      <ScrollY>
        <ArrowBox $h={18}>
          <svg width="8" height="6" viewBox="0 0 8 6" fill="none" stroke="#555" strokeWidth="1.800">
            <path d="M.6 5 4 1.300 7.400 5" />
          </svg>
        </ArrowBox>
        <Thumb />
        <Grow />
        <ArrowBox $h={18}>
          <svg width="8" height="6" viewBox="0 0 8 6" fill="none" stroke="#555" strokeWidth="1.800">
            <path d="M.6 1 4 4.700 7.400 1" />
          </svg>
        </ArrowBox>
      </ScrollY>
      <div />
      <ScrollX>
        <svg width="6" height="8" viewBox="0 0 6 8" fill="none" stroke="#bbb" strokeWidth="1.500">
          <path d="M5 .6 1.300 4 5 7.400" />
        </svg>
        <svg width="6" height="8" viewBox="0 0 6 8" fill="none" stroke="#bbb" strokeWidth="1.500">
          <path d="M1 .6 4.700 4 1 7.400" />
        </svg>
      </ScrollX>
      <Corner>
        <svg width="9" height="9" viewBox="0 0 9 9" fill="#b9b9b9">
          <path d="M6 0h2v2H6zM3 3h2v2H3zM6 3h2v2H6zM0 6h2v2H0zM3 6h2v2H3zM6 6h2v2H6z" />
        </svg>
      </Corner>
    </TextArea>
  </Window>
);

/* page controls */

const Controls = styled.div`
  position: absolute;
  left: 263px;
  top: 637px;
  width: 273px;
  height: 44px;
  border-radius: 22px;
  background: #404040;
  display: flex;
  align-items: center;
  padding-left: 16px;
  font-family: ${google};
  font-size: 14px;
  font-weight: 500;
  line-height: 20px;
  color: #ededed;
`;

const PageInput = styled.div`
  width: 35px;
  height: 17px;
  margin-left: 6px;
  padding-left: 1px;
  background: #1f1f1f;
  text-align: center;
  font-size: 13px;
  line-height: 17px;
`;

const ControlRule = styled.div`
  width: 2px;
  height: 44px;
  background: #5c5c5c;
`;

const ViewerLayer = () => (
  <Viewer>
    <HeadSide>
      <Cell $w={63}>
        <MdArrowBack size={23} />
      </Cell>
      <Pdf $size={18}>PDF</Pdf>
      <FileName w={170}>examen_java_2017.pdf</FileName>
    </HeadSide>
    <HeadCenter>
      <div />
      <OpenWith>
        <svg width="14" height="14" viewBox="0 0 14 14">
          <rect width="14" height="14" rx="1.500" fill="#4d83f0" />
          <path d="M3 4h8M3 6.900h8M3 9.800h5.500" stroke="#fff" strokeWidth="1.400" />
        </svg>
        <OpenLabel w={164}>Ouvrir avec Google Docs</OpenLabel>
        <VRule $h={38} $color="#919191" />
        <Cell $w={35} $color="#fff">
          <MdArrowDropDown size={23} />
        </Cell>
      </OpenWith>
      <HeadEnd>
        <svg width="22" height="20" viewBox="0 0 22 20" fill="none" stroke="currentColor" strokeWidth="1.800">
          <path d="M12 18.200H5.200Q3.600 18.200 2.800 16.900L1.500 14.600Q.8 13.300 1.500 12L7 2.300Q7.800 1 9.300 1H12.300Q13.700 1 14.500 2.300L18 8.700" />
          <path d="M12.500 14H6.600L10.300 7.300 12.800 11.500H9.800" strokeWidth="1.500" />
          <path d="M17.800 10.800v7.800M13.900 14.700h7.800" strokeWidth="1.900" />
        </svg>
      </HeadEnd>
    </HeadCenter>
    <HeadSide>
      <Cell $w={46}>
        <MdPrint size={24} />
      </Cell>
      <Cell $w={50}>
        <svg width="16" height="16" viewBox="0 0 16 16" fill="none" stroke="currentColor" strokeWidth="1.800">
          <path d="M8 0v10.500M3.800 6.500 8 10.700l4.200-4.200M.9 11v3q0 1.100 1.100 1.100h12q1.100 0 1.100-1.100v-3" />
        </svg>
      </Cell>
      <Cell $w={46}>
        <MdMoreVert size={24} />
      </Cell>
      <Share>
        <ShareIcon>
          <MdPublic size={18} />
        </ShareIcon>
        <ShareLabel w={58}>Partager</ShareLabel>
        <ShareDrop>
          <MdArrowDropDown size={18} />
        </ShareDrop>
      </Share>
    </HeadSide>
    <Gutter>
      <Round>
        <MdChevronLeft size={22} />
      </Round>
    </Gutter>
    <Paper>
      <Notepad />
      <Caption>
        <Fit w={153}>Figure 2 Résultat de l'exécution</Fit>
      </Caption>
      <Para $top={11}>
        <Fit w={68}>
          <b>Questions</b>
        </Fit>
        <Fit w={299.500}> : fournir le code des méthodes en pointillées.</Fit>
      </Para>
      <Para $top={11} $left={4}>
        <Fit w={69}>
          <b>Remarque</b>
        </Fit>
        <Fit w={170}> : Concernant la méthode </Fit>
        <Fit w={134}>
          <i>dessinerHierarchie()</i>
        </Fit>
      </Para>
      <Para $top={11} $left={24}>
        <Num>1)</Num>
        <Fit w={149}>Utiliser les caractères (</Fit>
        <Glyph $w={16} $size={13}>└─</Glyph>
        <Fit w={9}>, </Fit>
        <Glyph $w={18} $size={16}>├</Glyph>
        <Fit w={10}>, </Fit>
        <Glyph $w={14} $size={14}>│</Glyph>
        <Fit w={183}>) pour dessiner la hiérarchie</Fit>
      </Para>
      <Para $top={0} $left={24}>
        <Num>2)</Num>
        <Fit w={113}>pour la méthode </Fit>
        <Fit w={134.500}>
          <i>dessinerHierarchie()</i>
        </Fit>
        <Fit w={250.500}> vous pouvez faire appel à vos propres</Fit>
      </Para>
      <Para $top={0} $left={48.500}>
        <Fit w={65}>fonctions.</Fit>
      </Para>
      <Controls>
        <Fit w={32}>Page</Fit>
        <PageInput>4</PageInput>
        <Cell $w={20}>/</Cell>
        <Cell $w={32}>4</Cell>
        <Cell $w={7} />
        <ControlRule />
        <Cell $w={42} $color="#9a9a9a">
          <MdRemove size={24} />
        </Cell>
        <Cell $w={37} $color="#fff">
          <MdZoomIn size={24} />
        </Cell>
        <Cell $w={43} $color="#fff">
          <MdAdd size={24} />
        </Cell>
      </Controls>
    </Paper>
    <Gutter $right>
      <Round>
        <MdChevronRight size={22} />
      </Round>
    </Gutter>
  </Viewer>
);

const ScrollThumb = styled.div`
  position: absolute;
  right: 4px;
  top: 583px;
  width: 8px;
  height: 104px;
  border-radius: 4px;
  background: #4a4b4b;
`;

/* ---------- taskbar ---------- */

const Taskbar = styled.div`
  height: 30px;
  flex: none;
  display: flex;
  align-items: center;
  background: linear-gradient(90deg, #121415 0, #0b0d0e 200px, #030303 400px, #050402 700px, #020303 1100px, #081114 1440px);
  color: #fff;
`;

const TaskApp = styled.div<{ $line?: number; $active?: boolean }>`
  position: relative;
  width: 37px;
  height: 30px;
  display: flex;
  align-items: center;
  justify-content: center;
  background: ${(p) => (p.$active ? "#373737" : "transparent")};
  &::after {
    content: "";
    position: absolute;
    bottom: 0;
    height: 2px;
    width: ${(p) => p.$line || 0}px;
    background: #76b9ed;
  }
`;

const Links = styled(Fit)`
  margin-left: 4px;
  line-height: 18px;
`;

const apps: { icon: React.ReactNode; line?: number; active?: boolean }[] = [
  {
    icon: (
      <svg width="16" height="16" viewBox="0 0 16 16">
        <circle cx="8" cy="8" r="8" fill="#1580d2" />
        <path d="M1 5.500Q3 0 8.500 0 16 .5 16 7q-.3 3.500-4.500 3.300-2.500-.3-1.800-1.500Q10.500 5 6.500 4.600 3 4.500 1 5.500z" fill="#4ac884" />
        <path d="M.2 7Q2 4.500 6 5 3.500 10 8 13.500q3 1.500 6-.5-2 3-6 3Q0 15.500.2 7z" fill="#0f5fb0" />
      </svg>
    ),
  },
  {
    icon: (
      <svg width="17" height="15" viewBox="0 0 17 15">
        <path d="M0 1h6.500L8 3h8v11H0z" fill="#e9a522" />
        <path d="M0 4h16.500v10H0z" fill="#fcd667" />
        <path d="M3.500 14V8h9.500v6h-2.500v-3h-4.500v3z" fill="#3f95dc" />
      </svg>
    ),
  },
  { icon: <FaWhatsapp size={18} color="#25d366" />, line: 28 },
  { icon: <BraveLogo size={16} />, line: 37, active: true },
  {
    icon: (
      <svg width="16" height="15" viewBox="0 0 16 15">
        <circle cx="8" cy="7.500" r="7.300" fill="#2f2a5c" />
        <path d="M.8 5.200h14.800M.4 7.700h15.400M.8 10.200h14.800" stroke="#fff" strokeWidth="1.300" />
      </svg>
    ),
  },
  {
    icon: (
      <svg width="17" height="17" viewBox="0 0 17 17">
        <circle cx="8.500" cy="8.500" r="8.500" fill="#1b1b1b" />
        <path d="M9.500 4.700H8a3.700 3.700 0 0 0 0 7.400M9 8h3.300v4.500" fill="none" stroke="#fff" strokeWidth="1.800" />
      </svg>
    ),
  },
  {
    icon: (
      <svg width="17" height="16" viewBox="0 0 17 16">
        <path d="M1 14Q-.5 10 1.500 7 3 2 8 0q2 .5 2 2 5 1 6 6l-.5 6.500h-3L12 11l-2 .5V16H6.500l-.7-4L4 15z" fill="#17a6dd" />
        <path d="M4.500 6q2 3.500 5.500 1M11 4.500v4" fill="none" stroke="#0d79ad" strokeWidth=".8" />
      </svg>
    ),
  },
  {
    icon: (
      <svg width="16" height="16" viewBox="0 0 16 16">
        <path d="M11.500 0 16 2v12l-4.500 2L.8 6 2 4.700l9.500 7V4.300L2 11.300.8 10z" fill="#1f8ad6" />
        <path d="M11.500 0 16 2v12l-4.500 2z" fill="#35a5ee" />
      </svg>
    ),
  },
  {
    icon: (
      <svg width="14" height="14" viewBox="0 0 14 14">
        <rect width="14" height="14" rx="2" fill="#1c2a44" />
        <path d="M0 9h14v3q0 2-2 2H2q-2 0-2-2z" fill="#2b5486" />
        <path d="M10 1.500v9.500L7 8.500 3 8z" fill="#f1f4f8" />
      </svg>
    ),
  },
  {
    icon: (
      <svg width="16" height="16" viewBox="0 0 16 16">
        <circle cx="8" cy="8" r="8" fill="#5865f2" />
        <g transform="translate(3 3)" color="#fff">
          <FaDiscord size={10} />
        </g>
      </svg>
    ),
  },
  {
    icon: (
      <svg width="16" height="16" viewBox="0 0 16 16">
        <defs>
          <linearGradient id="ring" x1="0" y1="0" x2="0" y2="1">
            <stop offset="0" stopColor="#f08b3c" />
            <stop offset="1" stopColor="#b58ae0" />
          </linearGradient>
        </defs>
        <circle cx="8" cy="8" r="7.200" fill="#2b2b30" stroke="url(#ring)" strokeWidth="1.600" />
        <path d="M6 4.500v7L11.500 8z" fill="#fff" />
      </svg>
    ),
    line: 28,
  },
];

const Bottom = () => (
  <Taskbar>
    <Cell $w={36}>
      <svg width="16" height="16" viewBox="0 0 16 16" fill="#fff">
        <path d="M0 2.200 6.600 1.300v6.200H0zM7.300 1.200 16 0v7.500H7.300zM0 8.300h6.600v6.300L0 13.700zM7.300 8.300H16V16l-8.700-1.300z" />
      </svg>
    </Cell>
    <Links w={27}>Liens</Links>
    <Cell $w={448.500} />
    {apps.map((a, i) => (
      <TaskApp key={i} $line={a.line} $active={a.active}>
        {a.icon}
      </TaskApp>
    ))}
    <Grow />
    <Cell $w={24}>
      <svg width="12" height="7" viewBox="0 0 12 7" fill="none" stroke="#fff" strokeWidth="1.200">
        <path d="M.5 6.300 6 .8l5.500 5.500" />
      </svg>
    </Cell>
    <Cell $w={23}>
      <svg width="11" height="16" viewBox="0 0 11 16">
        <rect x="2.300" width="6.400" height="12" rx="1" fill="#fff" />
        <path d="M.5 8.500v2.700q0 2 2 2h6q2 0 2-2V8.500M5.500 13v2.400M3 15.400h5" fill="none" stroke="#fff" />
      </svg>
    </Cell>
    <Cell $w={26}>
      <svg width="17" height="13" viewBox="0 0 17 13" fill="none" stroke="#fff" strokeWidth="1.100">
        <path d="M.6 4.500h2L6 1.200v10.600L2.600 8.500h-2zM8.300 4.500q1.200 2 0 4M10.700 3q2.200 3.500 0 7M13.200 1.300q3.400 5.200 0 10.400" />
      </svg>
    </Cell>
    <Cell $w={23}>
      <svg width="17" height="14" viewBox="0 0 17 14" fill="none" stroke="#fff" strokeWidth="1.100">
        <path d="M5 1.500h11v8.500H5M10.500 10v2.800M7 13h7M.6.600H5v4H.6zM2.800 4.600V13" />
      </svg>
    </Cell>
    <Cell $w={6} />
    <Fit w={27}>13:26</Fit>
    <Cell $w={18} />
    <svg width="16" height="16" viewBox="0 0 16 16">
      <path d="M0 0h16v13h-5.500L8 16l-2.500-3H0z" fill="#fff" />
      <path d="M3 4h10M3 6.700h10M3 9.400h6" stroke="#0a1012" strokeWidth="1.100" />
    </svg>
    <Cell $w={20} />
    <VRule $h={30} $color="#6d7477" />
    <Cell $w={4} />
  </Taskbar>
);

export default function App() {
  return (
    <Screen>
      <Global />
      <Tabs />
      <Nav />
      <BookmarkRow />
      <Content>
        <DrivePage />
        <ViewerLayer />
        <ScrollThumb />
      </Content>
      <Bottom />
      <Find />
    </Screen>
  );
}
